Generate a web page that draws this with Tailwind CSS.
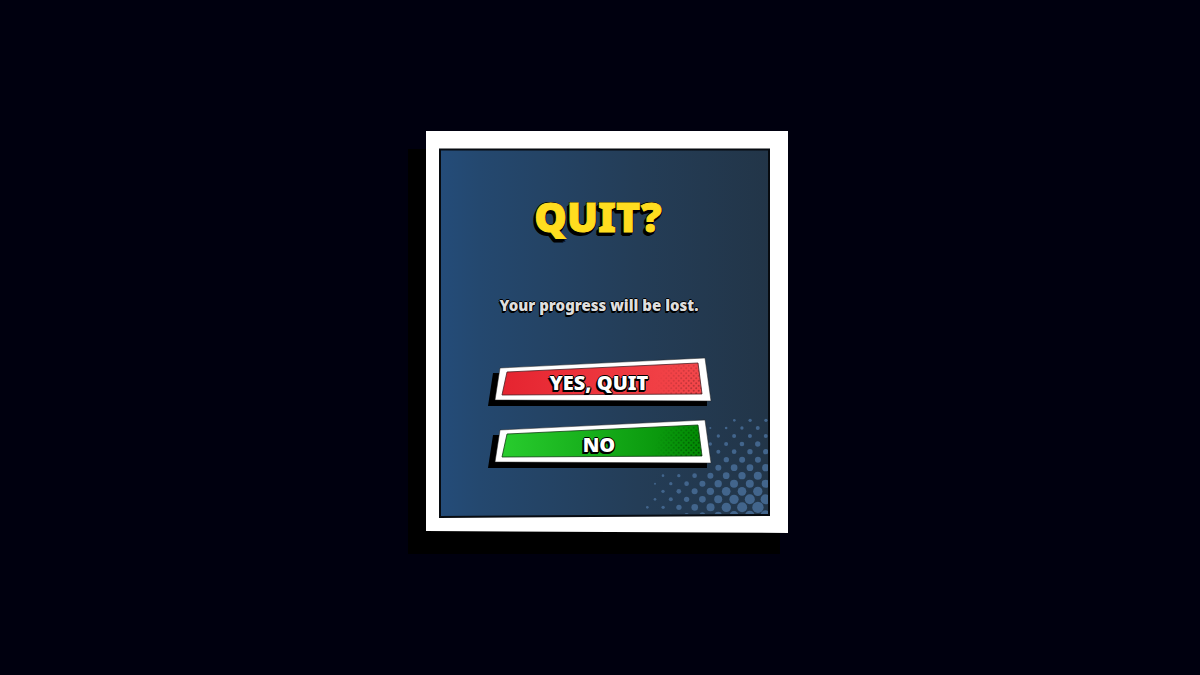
<!DOCTYPE html>
<html lang="en">
<head>
    <meta charset="UTF-8">
    <meta name="viewport" content="width=device-width, initial-scale=1.0">
    <title>Quit?</title>
    <script src="https://cdn.jsdelivr.net/npm/@tailwindcss/browser@4"></script>
</head>
<body class="min-h-screen bg-[#00000f] font-['Noto_Sans',sans-serif] flex items-center justify-center pl-[14px] pb-3">

    <!-- Quit dialog -->
    <div role="dialog" aria-labelledby="quit-title" aria-describedby="quit-text" class="relative isolate w-full max-w-[362px] px-4 pt-[58px] pb-[70px] flex flex-col items-center">

        <!-- Panel frame -->
        <svg class="absolute inset-0 -z-10 w-full h-full overflow-visible" viewBox="0 0 362 402" preserveAspectRatio="none" aria-hidden="true">
            <defs>
                <linearGradient id="panel-fill">
                    <stop offset="0" stop-color="#244c79"/>
                    <stop offset="0.12" stop-color="#24486f"/>
                    <stop offset="0.6" stop-color="#243d57"/>
                    <stop offset="1" stop-color="#223548"/>
                </linearGradient>
            </defs>
            <polygon points="-18,18 354,18 354,423 -18,423" fill="#000"/>
            <polygon points="0,0 362,0 362,402 0,400" fill="#fff"/>
            <polygon points="14,18.5 343,18.5 343,384 14,386" fill="url(#panel-fill)" stroke="#070b10" stroke-width="2"/>
        </svg>

        <!-- Halftone corner -->
        <svg id="halftone" class="absolute -z-10 right-5 bottom-[19px] w-32 h-[100px]" viewBox="28 41 384 300" fill="#42658c" aria-hidden="true"></svg>

        <h1 id="quit-title" class="pr-[18px] text-[41px] leading-[54px] font-black text-[#ffdd1f] [-webkit-text-stroke:1px_#ffdd1f] [text-shadow:1px_0_0_black,0_-1px_0_black,1px_1px_0_black,-1px_-1px_0_black,-1px_1px_0_black,-2px_2px_0_black,-3px_3px_0_black,-2px_4px_0_black,0_3px_0_black]">QUIT?</h1>

        <p id="quit-text" class="mt-[50px] pr-4 text-[15px] leading-6 font-black text-[#dedede] [text-shadow:1px_0_0_black,-1px_0_0_black,0_-1px_0_black,0_1px_0_black,-1px_2px_0_black]">Your progress will be lost.</p>

        <!-- Buttons -->
        <div class="mt-10 pr-2 w-[224px] flex flex-col gap-[18px]">
            <button type="button" class="relative isolate h-11 pt-2 pr-2 text-xl leading-6 font-black text-white cursor-pointer [text-shadow:1px_0_0_black,0_-1px_0_black,1px_1px_0_black,-1px_0_0_black,-1px_2px_0_black,-2px_2px_0_black,0_2px_0_black]">
                <svg class="absolute inset-0 -z-10 w-full h-full overflow-visible" viewBox="0 0 216 44" preserveAspectRatio="none" aria-hidden="true">
                    <defs>
                        <linearGradient id="red-fill">
                            <stop offset="0" stop-color="#e52430"/>
                            <stop offset="1" stop-color="#f4474b"/>
                        </linearGradient>
                        <radialGradient id="fade" gradientUnits="userSpaceOnUse" cx="205" cy="34" r="46">
                            <stop offset="0" stop-color="#fff"/>
                            <stop offset="1" stop-color="#000"/>
                        </radialGradient>
                        <pattern id="dots" width="5" height="5" patternUnits="userSpaceOnUse">
                            <circle cx="1.2" cy="1.2" r="1"/>
                            <circle cx="3.7" cy="3.7" r="1"/>
                        </pattern>
                        <mask id="dots-mask">
                            <polygon points="150,10 203,7 207,37 150,37" fill="url(#fade)"/>
                        </mask>
                    </defs>
                    <polygon points="-2,16 20,16 212,30 212,49 -7,49" fill="#000"/>
                    <polygon points="5,11 210,1 216,44 0,43" fill="#fff" stroke="#222" stroke-width="0.5"/>
                    <polygon points="12,15 203,6 207,37 7,38" fill="url(#red-fill)" stroke="#4a2024" stroke-width="0.8"/>
                    <rect x="150" y="6" width="60" height="32" fill="url(#dots)" mask="url(#dots-mask)" opacity="0.3"/>
                </svg>
                YES, QUIT
            </button>
            <button type="button" class="relative isolate h-11 pt-2 pr-2 text-xl leading-6 font-black text-white cursor-pointer [text-shadow:1px_0_0_black,0_-1px_0_black,1px_1px_0_black,-1px_0_0_black,-1px_2px_0_black,-2px_2px_0_black,0_2px_0_black]">
                <svg class="absolute inset-0 -z-10 w-full h-full overflow-visible" viewBox="0 0 216 44" preserveAspectRatio="none" aria-hidden="true">
                    <defs>
                        <linearGradient id="green-fill">
                            <stop offset="0" stop-color="#28cc2e"/>
                            <stop offset="1" stop-color="#028a04"/>
                        </linearGradient>
                    </defs>
                    <polygon points="-2,16 20,16 212,30 212,49 -7,49" fill="#000"/>
                    <polygon points="5,11 210,1 216,44 0,43" fill="#fff" stroke="#222" stroke-width="0.5"/>
                    <polygon points="12,15 203,6 207,37 7,38" fill="url(#green-fill)" stroke="#123d14" stroke-width="0.8"/>
                    <rect x="150" y="6" width="60" height="32" fill="url(#dots)" mask="url(#dots-mask)" opacity="0.4"/>
                </svg>
                NO
            </button>
        </div>
    </div>

    <script>
        // Halftone rows: y, x of the first dot, then the radii from left to right
        const rows = [
            [60, 311, [4, 5, 5]],
            [83, 239, [3, 4, 5, 6]],
            [107, 263, [5, 6, 6, 6]],
            [131, 239, [5, 6, 7, 8]],
            [154, 263, [6, 7, 8, 8]],
            [178, 287, [8, 9, 9]],
            [202, 263, [9, 10, 10, 11]],
            [226, 97, [4, 5, 7, 9, 10, 11, 12]],
            [250, 73, [3, 5, 7, 9, 11, 12, 12, 12]],
            [273, 97, [5, 7, 9, 11, 13, 13, 14]],
            [297, 73, [4, 6, 8, 10, 12, 14, 15, 15]],
            [321, 50, [4, 5, 8, 10, 12, 14, 15, 17]],
            [345, 73, [3, 5, 7, 9, 11, 13, 14, 15]]
        ];

        document.getElementById('halftone').innerHTML = rows.map(([y, x, radii]) =>
            radii.map((r, i) => `<circle cx="${x + i * 47.4}" cy="${y}" r="${r}"/>`).join('')
        ).join('');
    </script>

</body>
</html>
